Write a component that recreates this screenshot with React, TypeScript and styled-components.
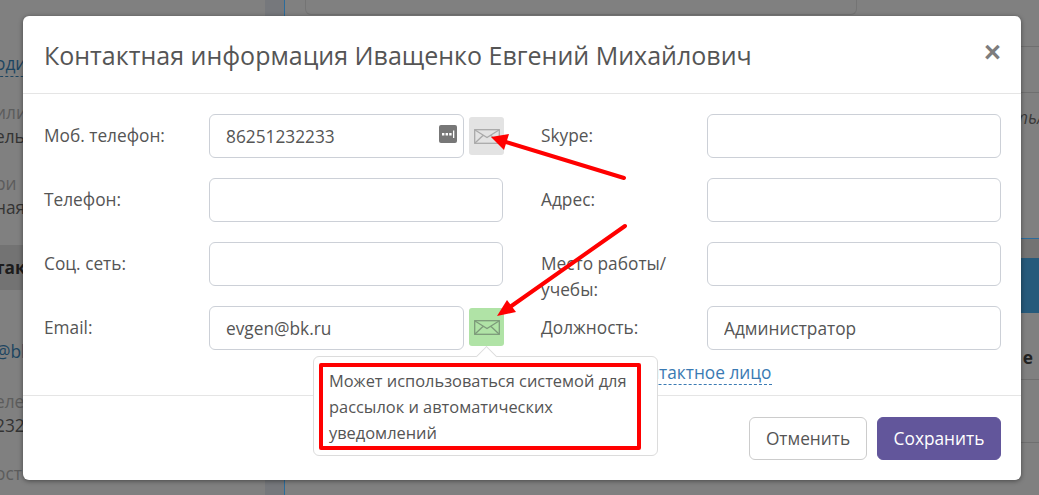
import React from "react";
import styled, { createGlobalStyle } from "styled-components";

const GlobalStyle = createGlobalStyle`
  html, body {
    margin: 0;
    padding: 0;
    height: 100%;
    overflow: hidden;
    background: #808080;
    font-family: "Open Sans", "Liberation Sans", sans-serif;
    color: #555;
  }
  * { box-sizing: border-box; }
`;

const Page = styled.div`
  position: relative;
  display: flex;
  width: 1039px;
  height: 495px;
  overflow: hidden;
  background: #808080;
`;

const Sidebar = styled.aside`
  width: 265px;
  padding-top: 52px;
  font-size: 17.3px;
  line-height: 24px;
  white-space: nowrap;
  text-indent: -5px;
  color: #4b4b4b;
`;

const SideGroup = styled.div<{ $top: number }>`
  margin-top: ${({ $top }) => $top}px;
`;

const SideLink = styled.span`
  color: #1d4560;
  border-bottom: 1px dashed #1d4560;
  padding-bottom: 1px;
`;

const SideMuted = styled.div`
  color: #5c5c5c;
`;

const SideDark = styled.div`
  color: #333;
`;

const SideBlue = styled.div`
  color: #1d4560;
`;

const SideHeading = styled.div`
  margin-top: 25px;
  height: 45px;
  background: #737373;
  font-weight: 700;
  line-height: 45px;
  color: #1c1c1c;
`;

const Strip = styled.div`
  width: 20px;
  background: #76787c;
  border-right: 1px solid #2b6c9c;
`;

const Content = styled.main`
  flex: 1;
  display: flex;
  flex-direction: column;
`;

const TopCard = styled.div`
  margin: 0 182px 0 20px;
  height: 15px;
  border: 1px solid #747474;
  border-top: 0;
  border-radius: 0 0 6px 6px;
`;

const RuleRow = styled.div<{ $h: number }>`
  height: ${({ $h }) => $h}px;
  border-bottom: 1px solid #6f6f6f;
`;

const ItalicRow = styled.div`
  height: 145px;
  margin-right: -4px;
  padding-top: 13px;
  font-size: 17.3px;
  line-height: 24px;
  font-style: italic;
  text-align: right;
  color: #3a3a3a;
  white-space: nowrap;
`;

const BlueLine = styled.div`
  height: 20px;
  background: #737373;
  border-top: 1px solid #2b6c9c;
`;

const BlueBand = styled.div`
  height: 55px;
  background: #265a7b;
`;

const TableHead = styled.div`
  height: 67px;
  padding: 33px 6px 0 0;
  border-bottom: 1px solid #6f6f6f;
  font-size: 17.3px;
  line-height: 24px;
  font-weight: 700;
  text-align: right;
  color: #222;
`;

const Overlay = styled.div`
  position: absolute;
  inset: 0;
  padding: 16px 0 0 23px;
`;

const Modal = styled.section`
  width: 998px;
  height: 464px;
  background: #fff;
  border-radius: 6px;
  box-shadow: 0 1px 5px rgba(0, 0, 0, 0.45);
  display: flex;
  flex-direction: column;
`;

const Header = styled.header`
  flex: none;
  height: 78px;
  padding: 0 20px 0 21px;
  border-bottom: 1px solid #e5e5e5;
  display: flex;
  align-items: center;
  justify-content: space-between;
`;

const Title = styled.h2`
  margin: 0;
  font-size: 25px;
  font-weight: 400;
  color: #555;
`;

const Close = styled.button`
  border: 0;
  padding: 0;
  background: none;
  font-family: "Liberation Sans", sans-serif;
  font-size: 29px;
  font-weight: 700;
  line-height: 1;
  color: #7d7d7d;
  margin-top: -5px;
`;

const Body = styled.div`
  flex: 1;
  min-height: 0;
  padding: 20px 20px 0 21px;
  display: grid;
  grid-template-columns: 460px 460px;
  column-gap: 37px;
  row-gap: 20px;
  grid-auto-rows: 44px;
  align-content: start;
`;

const Field = styled.div`
  display: flex;
`;

const Label = styled.label<{ $wide?: boolean }>`
  width: ${({ $wide }) => ($wide ? "166px" : "165px")};
  flex: none;
  padding-top: 9px;
  font-size: 17.3px;
  line-height: 26px;
  color: #555;
`;

const InputWrap = styled.div<{ $short?: boolean }>`
  position: relative;
  width: ${({ $short }) => ($short ? "255px" : "294px")};
`;

const Input = styled.input`
  width: 100%;
  height: 44px;
  padding: 0 16px;
  border: 1px solid #ccd0d7;
  border-radius: 6px;
  outline: none;
  font-family: inherit;
  font-size: 17.3px;
  color: #555;
`;

const SmsIcon = styled.svg`
  position: absolute;
  top: 11px;
  right: 7px;
`;

const MailWrap = styled.div`
  position: relative;
  margin-left: 5px;
`;

const MailButton = styled.button<{ $active?: boolean }>`
  width: 35px;
  height: 38px;
  margin-top: ${({ $active }) => ($active ? "2px" : "3px")};
  padding: 0;
  border: 0;
  border-radius: 3px;
  background: ${({ $active }) => ($active ? "#b0e3a6" : "#e3e3e3")};
  color: ${({ $active }) => ($active ? "#7d9a7a" : "#a9a9a9")};
  display: flex;
  align-items: center;
  justify-content: center;
`;

const Tooltip = styled.div`
  position: absolute;
  top: 50px;
  left: -156px;
  width: 345px;
  height: 100px;
  padding: 6px 5px;
  background: #fff;
  border: 1px solid #dcdcdc;
  border-radius: 6px;
  z-index: 2;

  &::before {
    content: "";
    position: absolute;
    top: -8px;
    left: 165px;
    width: 14px;
    height: 14px;
    background: #fff;
    border-top: 1px solid #dcdcdc;
    border-left: 1px solid #dcdcdc;
    transform: rotate(45deg);
  }
`;

const TooltipText = styled.div`
  position: relative;
  width: 322px;
  height: 87px;
  padding: 1px 6px 0;
  border: 4px solid #ff0000;
  border-radius: 2px;
  font-size: 16.4px;
  line-height: 26px;
  color: #555;
`;

const LinkRow = styled.div`
  grid-column: 2;
  margin-top: -9px;
  padding-left: 2px;
  font-size: 17.3px;
  line-height: 24px;
  white-space: nowrap;
`;

const DashedLink = styled.a`
  color: #3a7ab3;
  border-bottom: 1px dashed #3a7ab3;
`;

const Footer = styled.footer`
  flex: none;
  height: 85px;
  padding: 21px 20px 0 0;
  border-top: 1px solid #e5e5e5;
  display: flex;
  justify-content: flex-end;
  gap: 10px;
`;

const Button = styled.button<{ $primary?: boolean }>`
  width: ${({ $primary }) => ($primary ? "124px" : "118px")};
  height: 43px;
  border: 1px solid ${({ $primary }) => ($primary ? "#62569b" : "#ccc")};
  border-radius: 6px;
  background: ${({ $primary }) => ($primary ? "#62569b" : "#fff")};
  color: ${({ $primary }) => ($primary ? "#fff" : "#555")};
  font-family: inherit;
  font-size: 17.3px;
`;

const Arrows = styled.svg`
  position: absolute;
  inset: 0;
  z-index: 3;
  pointer-events: none;
`;

const MailIcon = () => (
  <svg width="26" height="15" viewBox="0 0 26 15" fill="none" stroke="currentColor" strokeWidth="1.3">
    <rect x="0.7" y="0.7" width="24.6" height="13.6" />
    <path d="M1 1l12 7.5L25 1M1 14l8.5-8M25 14l-8.5-8" />
  </svg>
);

const ContactModal = () => (
  <Modal>
    <Header>
      <Title>Контактная информация Иващенко Евгений Михайлович</Title>
      <Close>×</Close>
    </Header>
    <Body>
      <Field>
        <Label>Моб. телефон:</Label>
        <InputWrap $short>
          <Input readOnly value="86251232233" />
          <SmsIcon width="18" height="18" viewBox="0 0 18 18">
            <rect width="18" height="18" rx="2" fill="#777" />
            <path d="M3 8h2.400v2.400H3zM6.600 8H9v2.400H6.600zM10.200 8h2.400v2.400h-2.400zM14 5.500h1.300v7.500H14z" fill="#fff" />
          </SmsIcon>
        </InputWrap>
        <MailWrap>
          <MailButton>
            <MailIcon />
          </MailButton>
        </MailWrap>
      </Field>
      <Field>
        <Label $wide>Skype:</Label>
        <InputWrap>
          <Input readOnly />
        </InputWrap>
      </Field>
      <Field>
        <Label>Телефон:</Label>
        <InputWrap>
          <Input readOnly />
        </InputWrap>
      </Field>
      <Field>
        <Label $wide>Адрес:</Label>
        <InputWrap>
          <Input readOnly />
        </InputWrap>
      </Field>
      <Field>
        <Label>Соц. сеть:</Label>
        <InputWrap>
          <Input readOnly />
        </InputWrap>
      </Field>
      <Field>
        <Label $wide>
          Место работы/
          <br />
          учебы:
        </Label>
        <InputWrap>
          <Input readOnly />
        </InputWrap>
      </Field>
      <Field>
        <Label>Email:</Label>
        <InputWrap $short>
          <Input readOnly value="evgen@bk.ru" />
        </InputWrap>
        <MailWrap>
          <MailButton $active>
            <MailIcon />
          </MailButton>
          <Tooltip>
            <TooltipText>
              Может использоваться системой для рассылок и автоматических
              уведомлений
            </TooltipText>
          </Tooltip>
        </MailWrap>
      </Field>
      <Field>
        <Label $wide>Должность:</Label>
        <InputWrap>
          <Input readOnly value="Администратор" />
        </InputWrap>
      </Field>
      <LinkRow>
        <DashedLink>Добавить контактное лицо</DashedLink>
      </LinkRow>
    </Body>
    <Footer>
      <Button>Отменить</Button>
      <Button $primary>Сохранить</Button>
    </Footer>
  </Modal>
);

export default function App() {
  return (
    <>
      <GlobalStyle />
      <Page>
        <Sidebar>
          <SideGroup $top={0}>
            <SideLink>одит</SideLink>
          </SideGroup>
          <SideGroup $top={25}>
            <SideMuted>или</SideMuted>
            <SideDark>ель</SideDark>
          </SideGroup>
          <SideGroup $top={23}>
            <SideMuted>ри</SideMuted>
            <SideDark>ная</SideDark>
          </SideGroup>
          <SideHeading>так</SideHeading>
          <SideGroup $top={50}>
            <SideBlue>@bk</SideBlue>
          </SideGroup>
          <SideGroup $top={26}>
            <SideMuted>еле</SideMuted>
            <SideDark>232</SideDark>
          </SideGroup>
          <SideGroup $top={24}>
            <SideMuted>ост</SideMuted>
          </SideGroup>
        </Sidebar>
        <Strip />
        <Content>
          <TopCard />
          <RuleRow $h={32} />
          <RuleRow $h={46} />
          <ItalicRow>ть/</ItalicRow>
          <BlueLine />
          <BlueBand />
          <TableHead>е</TableHead>
          <RuleRow $h={63} />
        </Content>
        <Overlay>
          <ContactModal />
        </Overlay>
        <Arrows width="1039" height="495" viewBox="0 0 1039 495">
          <path d="M624 178L506 142" stroke="#f00" strokeWidth="4" strokeLinecap="round" fill="none" />
          <path d="M491 137L509 134L504 150Z" fill="#f00" />
          <path d="M625 226L510 307" stroke="#f00" strokeWidth="4" strokeLinecap="round" fill="none" />
          <path d="M497 316L507 300L516 312Z" fill="#f00" />
        </Arrows>
      </Page>
    </>
  );
}
